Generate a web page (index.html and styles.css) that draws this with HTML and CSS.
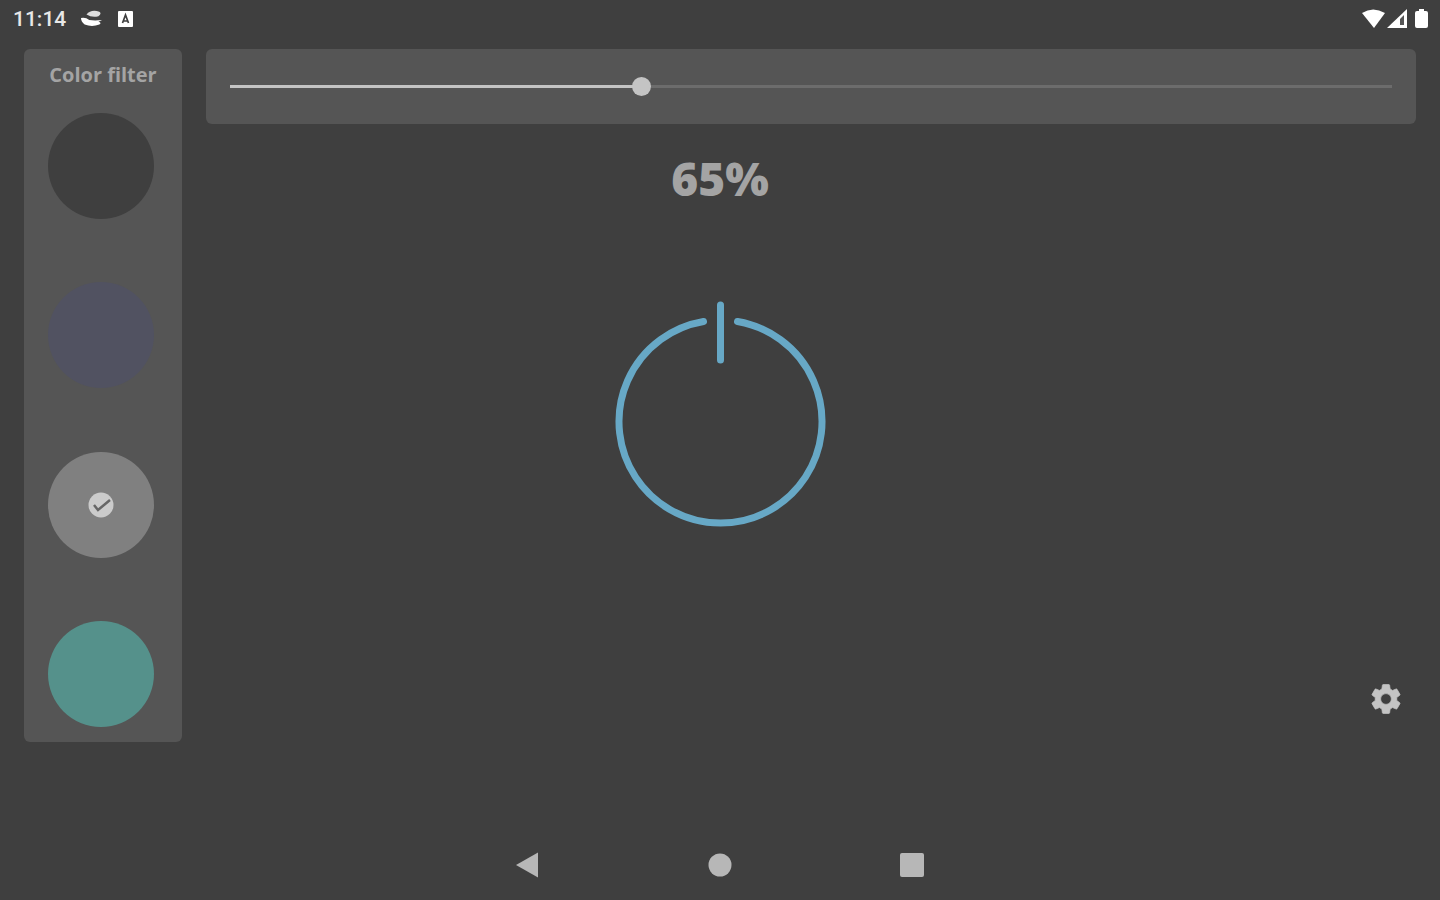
FILE: index.html
```html
<!DOCTYPE html>
<html lang="en">
<head>
  <meta charset="UTF-8">
  <meta name="viewport" content="width=device-width, initial-scale=1">
  <title>Color filter</title>
  <link rel="stylesheet" href="styles.css">
</head>
<body>
  <header class="status-bar">
    <div class="status-left">
      <span class="clock">11:14</span>
      <svg class="status-icon" width="22" height="20" viewBox="0 0 24 20">
        <path d="M6 5Q11 -1 20 2Q23 4 19 7Q12 9 6 5Z" fill="#ddd"/>
        <path d="M0 9Q5 8 9 11Q15 12 23 11L19 13Q23 14 20 16Q12 19 4 16Q0 13 0 9Z" fill="#fff"/>
      </svg>
      <svg class="status-icon" width="16" height="18" viewBox="0 0 16 18">
        <rect x="0" y="1" width="15" height="16" rx="1" fill="#fff"/>
        <path d="M4.500 13L7.500 5L10.500 13M5.500 11H9.500" fill="none" stroke="#3f3f3f" stroke-width="1.700"/>
      </svg>
    </div>
    <svg class="status-icon" width="68" height="20" viewBox="0 0 68 20">
      <path d="M0 4Q11 -3 23 4L12 19Z" fill="#fff"/>
      <path d="M25 19L45 0V19Z" fill="#fff"/>
      <path d="M38 10L42 6V16H38Z" fill="#555"/>
      <path d="M57 0H62V2H64Q66 2 66 4V17Q66 19 64 19H55Q53 19 53 17V4Q53 2 55 2H57Z" fill="#fff"/>
    </svg>
  </header>

  <main class="screen">
    <section class="filters">
      <h2 class="filters-title">Color filter</h2>
      <div class="swatches">
        <label class="swatch">
          <input class="swatch-input black" type="radio" name="filter" aria-label="Black">
        </label>
        <label class="swatch">
          <input class="swatch-input blue" type="radio" name="filter" aria-label="Blue">
        </label>
        <label class="swatch">
          <input class="swatch-input grey" type="radio" name="filter" aria-label="Grey" checked>
          <svg class="check" width="26" height="26" viewBox="0 0 26 26">
            <circle cx="13" cy="13" r="12.500" fill="#cbcbcb"/>
            <path d="M6 13L10 18L22 8" fill="none" stroke="#666" stroke-width="2.500"/>
          </svg>
        </label>
        <label class="swatch">
          <input class="swatch-input green" type="radio" name="filter" aria-label="Green">
        </label>
      </div>
    </section>

    <div class="slider-card">
      <input class="slider" id="level" type="range" min="0" max="100" step="0.1" value="35.2" aria-label="Brightness" style="--fill: 35.2%">
    </div>

    <div class="stage">
      <output class="percent" for="level">65%</output>
      <button class="power" type="button" aria-label="Turn filter on or off">
        <svg width="216" height="232" viewBox="0 0 216 232">
          <path d="M91.500 21.500A101.500 101.500 0 1 0 125.500 21.500" />
          <path d="M108.500 5V60" />
        </svg>
      </button>
    </div>

    <button class="settings" type="button" aria-label="Settings">
      <svg width="36" height="36" viewBox="0 0 24 24">
        <path fill="#c4c4c4" stroke="#c4c4c4" stroke-width=".5" d="M19.140 12.940c.04-.3.060-.61.060-.94s-.02-.64-.07-.94l2.030-1.580c.18-.14.23-.41.120-.61l-1.920-3.320c-.12-.22-.37-.29-.59-.22l-2.390.96c-.5-.38-1.030-.7-1.620-.94l-.36-2.540c-.04-.24-.24-.41-.48-.41h-3.840c-.24 0-.43.170-.47.410l-.36 2.540c-.59.240-1.130.57-1.620.94l-2.390-.96c-.22-.08-.47 0-.59.220L2.740 8.870c-.12.210-.08.470.12.610l2.030 1.580c-.05.3-.09.63-.09.940s.02.64.07.940l-2.030 1.580c-.18.140-.23.410-.12.610l1.920 3.320c.12.220.37.290.59.220l2.390-.96c.5.380 1.030.7 1.620.94l.36 2.540c.05.240.24.410.48.410h3.840c.24 0 .44-.17.47-.41l.36-2.540c.59-.24 1.130-.56 1.620-.94l2.390.96c.22.080.47 0 .59-.22l1.920-3.320c.12-.22.070-.47-.12-.61zM12 15.600c-1.980 0-3.600-1.620-3.600-3.600s1.620-3.600 3.600-3.600 3.600 1.620 3.600 3.600-1.620 3.600-3.600 3.600z"/>
      </svg>
    </button>
  </main>

  <nav class="nav-bar">
    <button class="nav-button" type="button" aria-label="Back">
      <svg width="24" height="26" viewBox="0 0 24 26"><path d="M0 13L22 0.500V25.500Z"/></svg>
    </button>
    <button class="nav-button" type="button" aria-label="Home">
      <svg width="24" height="24" viewBox="0 0 24 24"><circle cx="12" cy="12" r="11.500"/></svg>
    </button>
    <button class="nav-button" type="button" aria-label="Recent apps">
      <svg width="24" height="24" viewBox="0 0 24 24"><rect width="24" height="24" rx="2"/></svg>
    </button>
  </nav>

  <script>
    const level = document.getElementById('level');
    level.addEventListener('input', () => {
      level.style.setProperty('--fill', level.value + '%');
      document.querySelector('.percent').textContent = Math.round(100 - level.value) + '%';
    });
  </script>
</body>
</html>
```

FILE: styles.css
```css
* {
  box-sizing: border-box;
}

body {
  margin: 0;
  min-height: 100vh;
  display: flex;
  flex-direction: column;
  background-color: #3f3f3f;
  font-family: Roboto, sans-serif;
  color: #a4a4a4;
}

button {
  padding: 0;
  border: none;
  background: none;
  cursor: pointer;
}

svg {
  display: block;
}

.status-bar {
  display: flex;
  justify-content: space-between;
  align-items: center;
  height: 38px;
  padding: 0 10px 0 13px;
}

.status-left {
  display: flex;
  align-items: center;
  gap: 15px;
}

.clock {
  font-size: 21px;
  font-weight: 500;
  color: #e8e8e8;
}

.screen {
  flex: 1;
  display: grid;
  grid-template-columns: 158px 1fr;
  grid-template-rows: auto 1fr;
  column-gap: 24px;
  padding: 11px 24px 88px;
}

.filters {
  grid-column: 1;
  grid-row: 1 / 3;
  z-index: 1;
  display: flex;
  flex-direction: column;
  gap: 26px;
  padding: 14px 24px 15px;
  border-radius: 6px;
  background-color: #555;
}

.filters-title {
  margin: 0;
  font-family: "Open Sans", sans-serif;
  font-size: 20px;
  line-height: 24px;
  font-weight: 700;
  text-align: center;
  white-space: nowrap;
}

.swatches {
  flex: 1;
  display: flex;
  flex-direction: column;
  justify-content: space-between;
}

.swatch {
  display: grid;
  width: 106px;
  height: 106px;
  place-items: center;
}

.swatch-input,
.check {
  grid-area: 1 / 1;
}

.swatch-input {
  appearance: none;
  width: 100%;
  height: 100%;
  margin: 0;
  border-radius: 50%;
  cursor: pointer;
}

.black {
  background-color: #3f3f3f;
}

.blue {
  background-color: #515261;
}

.grey {
  background-color: #808080;
}

.green {
  background-color: #55918b;
}

.check {
  pointer-events: none;
}

.slider-card {
  grid-column: 2;
  grid-row: 1;
  display: flex;
  align-items: center;
  height: 75px;
  padding: 0 24px;
  border-radius: 6px;
  background-color: #555;
}

.slider {
  appearance: none;
  width: 100%;
  height: 20px;
  margin: 0;
  background: none;
}

.slider::-webkit-slider-runnable-track {
  height: 3px;
  background: linear-gradient(to right, #c4c4c4 var(--fill), #6c6c6c var(--fill));
}

.slider::-webkit-slider-thumb {
  appearance: none;
  width: 19px;
  height: 19px;
  margin-top: -8px;
  border-radius: 50%;
  background-color: #c4c4c4;
}

.stage {
  grid-column: 1 / 3;
  grid-row: 2;
  display: flex;
  flex-direction: column;
  align-items: center;
  gap: 96px;
  padding-top: 28px;
}

.percent {
  font-family: "Open Sans", sans-serif;
  font-size: 46px;
  line-height: 52px;
  font-weight: 800;
}

.power path {
  fill: none;
  stroke: #67a8c6;
  stroke-width: 7;
  stroke-linecap: round;
}

.settings {
  grid-column: 2;
  grid-row: 2;
  place-self: end;
  padding: 6px;
  margin: 0 6px 19px 0;
}

.nav-bar {
  display: flex;
  justify-content: center;
  gap: 144px;
  height: 70px;
}

.nav-button {
  display: grid;
  place-items: center;
  width: 48px;
}

.nav-button svg {
  fill: #b7b7b7;
}
```
